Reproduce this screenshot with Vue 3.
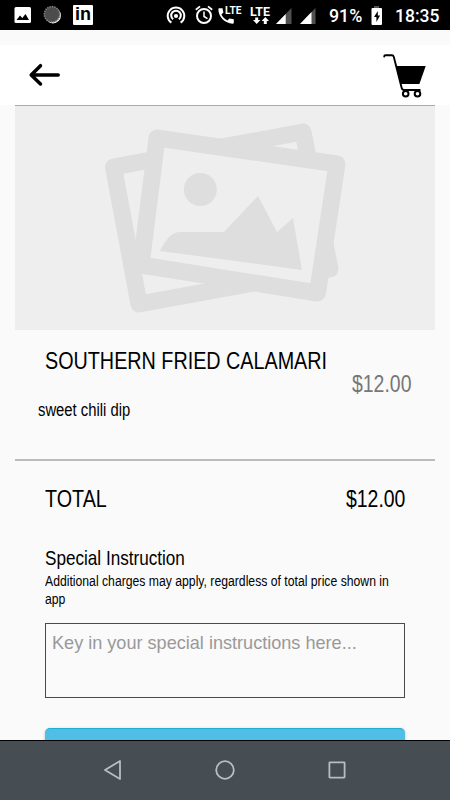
<script setup>
import { ref } from 'vue'

const item = { name: 'SOUTHERN FRIED CALAMARI', description: 'sweet chili dip', price: '$12.00' }
const total = '$12.00'
const instructions = ref('')
</script>

<template>
  <div class="screen">
    <header class="status">
      <div class="notifications">
        <svg width="18" height="30" viewBox="0 0 18 30"><rect x="0.5" y="7" width="16.5" height="16" rx="1.5" fill="#fff" /><path d="M2.5 20 6 15.5 8.3 18 11.5 14 15 20z" fill="#000" /></svg>
        <svg width="19" height="30" viewBox="0 0 19 30"><circle cx="10" cy="15.5" r="7.9" fill="#fff" /><circle cx="9" cy="14.3" r="8" fill="#4c4c4c" /><circle cx="9" cy="14.3" r="7.7" fill="none" stroke="#858585" stroke-width="1.6" stroke-dasharray="1.2 1.2" /></svg>
        <span class="linkedin">in</span>
      </div>
      <div class="system">
        <svg class="hotspot" width="20" height="30" viewBox="0 0 20 30" fill="none" stroke="#fff" stroke-width="2"><path d="M5.400 22.700A8.300 8.300 0 1 1 14.600 22.700M7.100 19.300A4.800 4.800 0 1 1 12.900 19.300" /><circle cx="10" cy="16" r="2.100" fill="#fff" stroke="none" /></svg>
        <svg class="alarm" width="18" height="30" viewBox="0 0 18 30" fill="none" stroke="#fff"><circle cx="9" cy="16" r="7" stroke-width="2" /><path d="M.8 9.700 5 6.400M17.200 9.700 13 6.400" stroke-width="1.800" /><path d="M9 11.500V16.500L12.500 18.700" stroke-width="1.500" /></svg>
        <svg class="call" width="25" height="30" viewBox="0 0 25 30"><path d="M1.400 8.300h3.100l.9 4.100-2 2c1.500 2.800 3.200 4.500 6 6l2-2 4.400.9v3.200c0 .8-.4 1.200-1.200 1.200C6.800 23.400.4 17 .4 9.300c0-.6.4-1 1-1z" fill="#fff" /><text x="7" y="13.700" class="lte-small" textLength="16.500" lengthAdjust="spacingAndGlyphs">LTE</text></svg>
        <svg class="data" width="21" height="30" viewBox="0 0 21 30"><text x="0" y="15.800" class="lte" textLength="20" lengthAdjust="spacingAndGlyphs">LTE</text><path d="M5.200 17.500h3V20h2.200l-3.700 4L3 20h2.200zM13.800 24v-3h-2.200l3.700-4 3.700 4h-2.200v3z" fill="#fff" /></svg>
        <svg class="signal" width="16" height="30" viewBox="0 0 16 30"><path d="M15.500 8v16H0z" fill="#505050" /><path d="M9.700 14v10H0z" fill="#fff" /></svg>
        <svg class="signal second" width="16" height="30" viewBox="0 0 16 30"><path d="M15.500 8v16H0z" fill="#505050" /><path d="M11.500 12.100V24H0z" fill="#fff" /></svg>
        <span class="percent">91%</span>
        <svg class="battery" width="12" height="30" viewBox="0 0 12 30"><path d="M3 6h5v2H3z" fill="#555" /><rect x=".5" y="8" width="10.500" height="17" rx="1" fill="#fff" /><path d="M6.800 11 3 17h2.400v5l3.700-6.500H6.800z" fill="#000" /></svg>
        <span class="clock">18:35</span>
      </div>
    </header>

    <nav class="toolbar">
      <svg class="back" width="34" height="26" viewBox="0 0 34 26" fill="none" stroke="#000" stroke-width="3.500" stroke-linecap="round" stroke-linejoin="round"><path d="M13.500 3.700 4.200 13l9.300 9M4.200 13h27" /></svg>
      <svg class="cart" width="46" height="46" viewBox="0 0 46 46"><path d="M2.200 4.600Q2.200 3.200 3.500 3.200h6.200q1.700 0 2.100 1.700L19.700 36q.5 2 2.500 2h15.600" fill="none" stroke="#000" stroke-width="1.900" stroke-linecap="round" /><path d="M13.800 14h29.900L37.400 32H18.600z" /><g fill="#fff" stroke="#000" stroke-width="2"><circle cx="23.700" cy="41.700" r="2.800" /><circle cx="35.500" cy="41.700" r="2.800" /></g></svg>
    </nav>

    <main class="content">
      <svg class="photo" viewBox="0 0 420 224">
        <path d="M0 0h420v224H0z" fill="#eee" />
        <g fill="none" stroke="#dedede" stroke-linejoin="round">
          <path d="M98.500 61 288 26 315 163 124 198z" stroke-width="17" />
          <path d="M142 32 322 58 302.500 187 126 159z" fill="#eee" stroke-width="17" />
        </g>
        <g fill="#dedede">
          <circle cx="185.300" cy="83.500" r="16.500" />
          <path d="M145 145Q154 126 165 126h44l34-36 19 36 16-14 9 52z" />
        </g>
      </svg>

      <section class="item">
        <div class="details">
          <h1><span class="narrow">{{ item.name }}</span></h1>
          <p><span class="narrow">{{ item.description }}</span></p>
        </div>
        <div class="price"><span class="narrow">{{ item.price }}</span></div>
      </section>

      <section class="total">
        <span class="narrow">TOTAL</span>
        <span class="narrow amount">{{ total }}</span>
      </section>

      <section class="special">
        <h2><span class="narrow">Special Instruction</span></h2>
        <p class="note"><span class="narrow">Additional charges may apply, regardless of total price shown in<br>app</span></p>
        <textarea v-model="instructions" placeholder="Key in your special instructions here..."></textarea>
        <button aria-label="Add item"></button>
      </section>
    </main>

    <footer class="navigation">
      <svg width="20" height="22" viewBox="0 0 20 22"><path d="M2 11 17 2v18z" /></svg>
      <svg width="20" height="22" viewBox="0 0 20 22"><circle cx="10" cy="11" r="8.800" /></svg>
      <svg width="20" height="22" viewBox="0 0 20 22"><rect x="2.400" y="3.400" width="15.200" height="15.200" rx=".5" /></svg>
    </footer>
  </div>
</template>

<style>
body { margin: 0; background: #fafafa; }
</style>

<style scoped>
* { box-sizing: border-box; }
.screen { width: 450px; height: 800px; overflow: hidden; display: flex; flex-direction: column; background: #fafafa; color: #000; font-family: "Liberation Sans", sans-serif; }
svg { display: block; flex: none; }
h1, h2, p { margin: 0; font-weight: 400; }
.status { height: 30px; flex: none; background: #000; color: #fff; display: flex; justify-content: space-between; padding-left: 14px; font-family: Roboto, sans-serif; }
.notifications, .system { display: flex; }
.notifications { gap: 11px; }
.linkedin { width: 20px; height: 20px; margin-top: 5px; border-radius: 1px; background: #fff; color: #000; text-align: center; font: 700 18px/19px "Liberation Sans", sans-serif; }
.system { width: 284px; align-items: center; white-space: nowrap; }
.alarm { margin-left: 9px; }
.call { margin-left: 5px; }
.data { margin-left: 7px; }
.signal { margin-left: 5px; }
.second { margin-left: 8px; }
.lte-small { font: 700 11px Roboto, sans-serif; fill: #fff; }
.lte { font: 700 13px Roboto, sans-serif; fill: #fff; }
.percent { font-size: 17.800px; font-weight: 500; line-height: 30px; width: 42px; margin-left: 13px; padding-top: 2px; }
.clock { font-size: 17.500px; font-weight: 500; line-height: 30px; margin-left: 12px; padding-top: 2px; }
.toolbar { height: 60px; flex: none; margin-top: 15px; background: #fff; display: flex; justify-content: space-between; padding: 7px 22px 0 27px; }
.back { margin-top: 10px; }
.content { flex: 1; min-height: 0; overflow: hidden; padding: 0 15px; }
.photo { width: 420px; height: 225px; border-top: 1px solid #aaa; }
.item { height: 131px; display: flex; border-bottom: 2px solid #bbb; padding-left: 23px; }
.narrow { display: inline-block; white-space: nowrap; transform: scaleX(.823); transform-origin: left center; }
.details { width: 314px; }
h1 { font-size: 24px; line-height: 28px; padding: 17px 0 0 7px; }
.item p { font-size: 18px; line-height: 22px; padding-top: 24px; }
.price { font-size: 24px; line-height: 28px; padding-top: 40px; color: #777; }
.price .narrow { transform: scaleX(.81); }
.total { height: 76px; display: flex; justify-content: space-between; align-items: center; padding: 0 30px; font-size: 24px; line-height: 28px; }
.amount { transform: scaleX(.81); transform-origin: right center; }
.special { padding: 7px 30px 0; }
h2 { font-size: 21px; line-height: 27px; }
h2 .narrow { transform: scaleX(.815); }
.note { font-size: 14px; line-height: 18px; height: 36px; margin-top: 1px; }
.note .narrow { transform: scaleX(.872); }
textarea { display: block; width: 360px; height: 75px; margin-top: 15px; padding: 8px 6px; resize: none; border: 1px solid #4a4a4a; border-radius: 0; background: #fafafa; font: 18.100px/22px "Liberation Sans", sans-serif; outline: none; }
textarea::placeholder { color: #999; }
button { display: block; width: 360px; height: 45px; margin-top: 30px; border: 0; border-top: 1px solid #25add2; border-radius: 5px; background: #50bfe8; box-shadow: 0 1px 3px #bbb; }
.navigation { height: 60px; flex: none; background: #464d53; border-top: 1px solid #000; display: flex; justify-content: center; align-items: center; gap: 92px; padding-bottom: 1px; }
.navigation svg { fill: none; stroke: #b9bdc0; stroke-width: 1.8; stroke-linejoin: round; }
</style>
